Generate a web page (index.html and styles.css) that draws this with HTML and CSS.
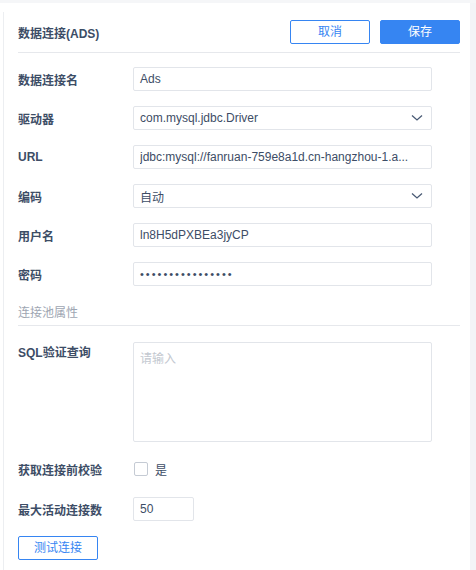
FILE: index.html
```html
<!DOCTYPE html>
<html lang="zh">
<head>
<meta charset="utf-8">
<link rel="stylesheet" href="styles.css">
</head>
<body>
<div class="strip"></div>
<div class="wrap">
  <div class="panel">
    <div class="header">
      <div class="title">数据连接(ADS)</div>
      <div class="actions">
        <button class="btn btn-outline">取消</button>
        <button class="btn btn-primary">保存</button>
      </div>
    </div>
    <div class="form">
      <div class="row">
        <div class="label">数据连接名</div>
        <div class="field">Ads</div>
      </div>
      <div class="row">
        <div class="label">驱动器</div>
        <div class="field select"><span>com.mysql.jdbc.Driver</span>
          <svg class="chev" width="12" height="8" viewBox="0 0 12 8"><path d="M1 1.5 L6 6 L11 1.5" fill="none" stroke="#4a5b75" stroke-width="1.3"/></svg>
        </div>
      </div>
      <div class="row">
        <div class="label">URL</div>
        <div class="field"><span class="ellip">jdbc:mysql://fanruan-759e8a1d.cn-hangzhou-1.a...</span></div>
      </div>
      <div class="row">
        <div class="label">编码</div>
        <div class="field select"><span>自动</span>
          <svg class="chev" width="12" height="8" viewBox="0 0 12 8"><path d="M1 1.5 L6 6 L11 1.5" fill="none" stroke="#4a5b75" stroke-width="1.3"/></svg>
        </div>
      </div>
      <div class="row">
        <div class="label">用户名</div>
        <div class="field">ln8H5dPXBEa3jyCP</div>
      </div>
      <div class="row">
        <div class="label">密码</div>
        <div class="field pwd">••••••••••••••••</div>
      </div>
    </div>
    <div class="section">连接池属性</div>
    <div class="form2">
      <div class="row top">
        <div class="label lab-pad">SQL验证查询</div>
        <div class="field area"><span class="ph">请输入</span></div>
      </div>
      <div class="row check-row">
        <div class="label">获取连接前校验</div>
        <div class="check"><span class="box"></span><span class="check-text">是</span></div>
      </div>
      <div class="row num-row">
        <div class="label">最大活动连接数</div>
        <div class="field small">50</div>
      </div>
      <button class="btn btn-outline test">测试连接</button>
    </div>
  </div>
  <div class="scroll"></div>
</div>
</body>
</html>
```
FILE: styles.css
```css
* { box-sizing: border-box; }
html, body { margin: 0; padding: 0; background: #fff; }
body {
  font-family: "Liberation Sans", "Noto Sans CJK SC", sans-serif;
  font-size: 12px;
  color: #3d4d66;
  width: 476px;
  height: 570px;
  overflow: hidden;
}
.strip { height: 3px; background: #f5f6f8; }
.wrap { display: flex; height: 567px; width: 476px; }
.panel {
  flex: 1;
  min-width: 0;
  margin-left: 3px;
  margin-top: 9px;
  border-left: 1px solid #eceef1;
  padding: 8px 10px 0 14px;
}
.scroll {
  width: 6px;
  flex: none;
  background: #f3f4f7;
}
.header {
  display: flex;
  align-items: center;
  justify-content: space-between;
  padding-bottom: 8px;
  border-bottom: 1px solid #e6e8ec;
}
.title { font-weight: 600; color: #3d4d66; font-size: 12px; }
.actions { display: flex; gap: 10px; }
.btn {
  font-family: "Liberation Sans", "Noto Sans CJK SC", sans-serif;
  font-size: 12px;
  width: 80px;
  height: 24px;
  border-radius: 2px;
  border: 1px solid #3685f2;
  padding: 0;
  line-height: 22px;
  cursor: pointer;
}
.btn-outline { background: #fff; color: #3685f2; }
.btn-primary { background: #3685f2; color: #fff; }
.form { padding-top: 14px; padding-right: 28px; }
.row { display: flex; align-items: center; margin-bottom: 15px; min-width: 0; }
.row.top { align-items: flex-start; margin-bottom: 16px; }
.label { width: 115px; flex: none; font-weight: 600; color: #3d4d66; }
.lab-pad { padding-top: 1px; }
.field {
  flex: 1;
  height: 24px;
  border: 1px solid #e2e5ea;
  border-radius: 2px;
  padding: 0 6px;
  display: flex;
  align-items: center;
  color: #3d4d66;
  min-width: 0;
  overflow: hidden;
}
.ellip { flex: 1; min-width: 0; white-space: nowrap; overflow: hidden; }
.select { justify-content: space-between; padding-right: 6px; }
.chev { margin-right: 2px; }
.pwd { font-size: 11px; letter-spacing: 2px; }
.section {
  margin-top: 18px;
  line-height: 18px;
  padding-bottom: 3px;
  color: #9ea6b2;
  border-bottom: 1px solid #e6e8ec;
}
.form2 { padding-top: 16px; padding-right: 28px; }
.area { height: 100px; align-items: flex-start; padding-top: 6px; }
.ph { color: #c3c8d0; }
.check-row { height: 22px; margin-bottom: 17px; }
.check { display: flex; align-items: center; gap: 7px; padding-left: 1px; }
.box {
  width: 14px; height: 14px;
  border: 1px solid #c5cbd4;
  border-radius: 2px;
  background: #fff;
}
.check-text { color: #3d4d66; }
.num-row { margin-bottom: 15px; }
.small { flex: none; width: 61px; }
.test { display: block; }
```
